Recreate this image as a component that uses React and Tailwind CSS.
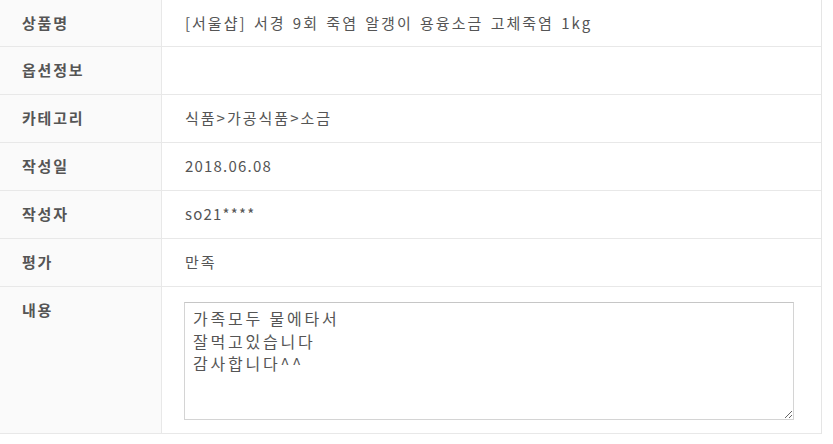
const rows = [
  { label: '상품명', value: '[서울샵] 서경 9회 죽염 알갱이 용융소금 고체죽염 1kg', wide: true },
  { label: '옵션정보', value: '' },
  { label: '카테고리', value: '식품>가공식품>소금', wide: true },
  { label: '작성일', value: '2018.06.08' },
  { label: '작성자', value: 'so21****' },
  { label: '평가', value: '만족', wide: true },
];

const font = { fontFamily: '"Noto Sans CJK KR", "Noto Sans", sans-serif' };

export default function App() {
  return (
    <div className="w-[833px] h-[444px] bg-white overflow-hidden" style={font}>
      <div className="w-[822px] border-r border-[#e5e5e5]">
        {rows.map((row, i) => (
          <div
            key={row.label}
            className={`flex border-b border-[#e8e8e8] ${i === 0 ? 'h-[47px]' : 'h-[48px]'}`}
          >
            <div className="w-[162px] shrink-0 bg-[#fafafa] border-r border-[#e8e8e8] flex items-center pl-[22px] text-[15px] tracking-[1.8px] font-bold text-[#555]">
              {row.label}
            </div>
            <div
              className={`flex-1 flex items-center pl-[23px] text-[15px] text-[#555] ${
                row.wide ? 'tracking-[2px] [word-spacing:2px]' : 'tracking-[1.2px]'
              }`}
            >
              {row.value}
            </div>
          </div>
        ))}
        <div className="flex h-[147px] border-b border-[#e8e8e8]">
          <div className="w-[162px] shrink-0 bg-[#fafafa] border-r border-[#e8e8e8] pl-[22px] pt-[12px] text-[15px] tracking-[1.8px] font-bold text-[#555]">
            내용
          </div>
          <div className="flex-1 pl-[22px] pt-[15px]">
            <textarea
              readOnly
              className="block w-[610px] h-[118px] border border-[#d4d4d4] border-t-[#c6c6c6] px-[8px] py-[4px] text-[16px] tracking-[2.8px] leading-[22.5px] text-[#555] outline-none"
              style={font}
              defaultValue={'가족모두 물에타서\n잘먹고있습니다\n감사합니다^^'}
            />
          </div>
        </div>
      </div>
    </div>
  );
}
